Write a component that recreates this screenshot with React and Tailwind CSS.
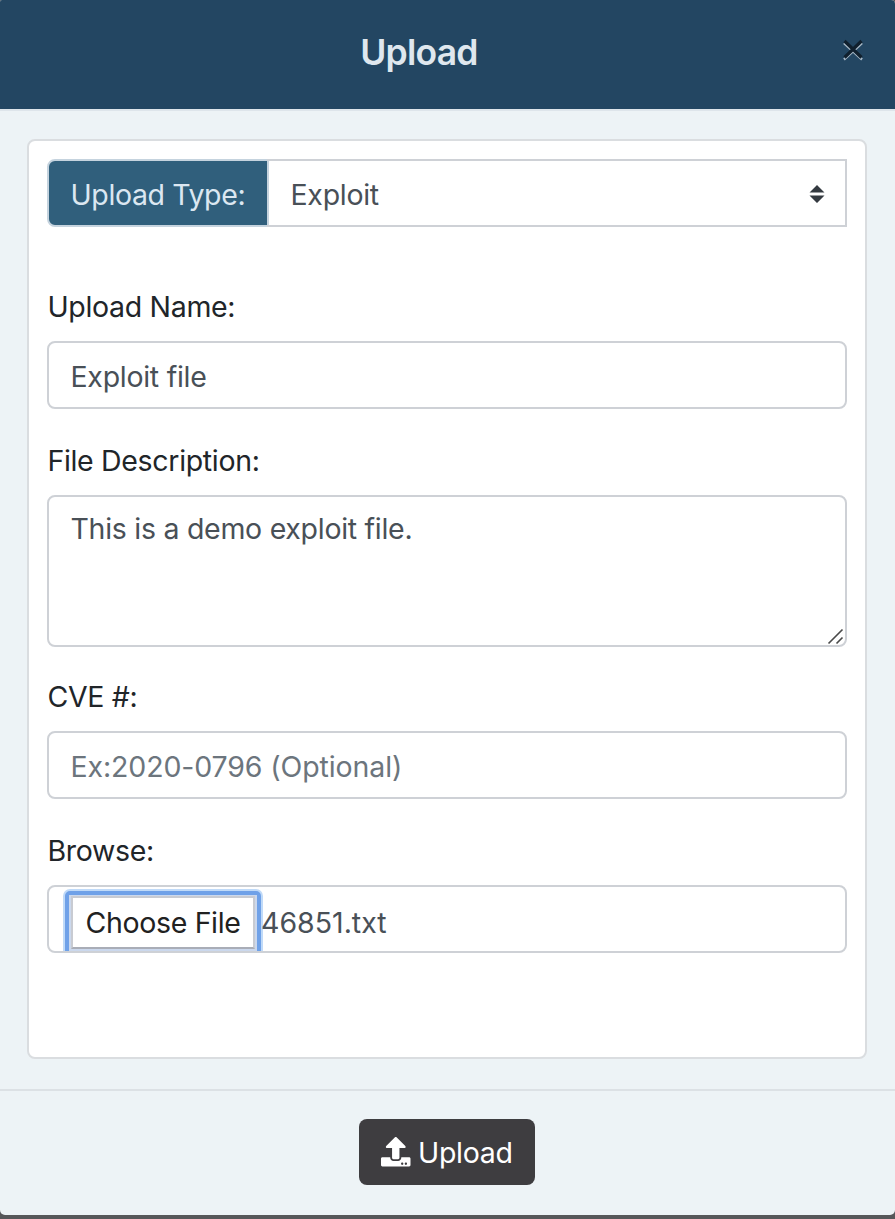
import { FaUpload } from "react-icons/fa";

const field =
  "block w-full rounded-lg border-2 border-[#ced1d6] bg-white px-[21.5px] text-[#495057] outline-none placeholder:tracking-[-0.12px] placeholder:text-[#6c757d] placeholder:opacity-100";

function Field({ label, id, children, className = "" }) {
  return (
    <div className={`flex flex-col ${className}`}>
      <label htmlFor={id} className="mb-[14px] block h-10 pl-[0.4px] leading-10 tracking-[-0.32px] text-[#212529]">
        {label}
      </label>
      {children}
    </div>
  );
}

function CloseIcon() {
  return (
    <svg width="22" height="24" viewBox="0 0 22 24" fill="none">
      <path d="M2 5 20 21.5M20 5 2 21.5" stroke="#a9bac8" strokeWidth="2.4" />
      <path d="M2.5 3 19.5 19.5M19.5 3 2.5 19.5" stroke="#10202e" strokeWidth="3.2" />
    </svg>
  );
}

export default function App() {
  return (
    <div className="h-[1219px] w-[895px] bg-[#565759] font-['Inter',sans-serif] text-[28.5px] tracking-[-0.28px]">
      <div className="flex h-[1215px] flex-col overflow-hidden rounded-[5px] rounded-tl-[2px] rounded-tr-[4px] bg-[#edf3f6]">
        <header className="flex h-[111px] shrink-0 border-b-2 border-[#dee5eb] bg-[#234662] pr-[31px]">
          <h5 className="flex-1 pt-[26px] pr-[4px] text-center text-[35.5px] leading-[54px] font-semibold tracking-[-0.75px] text-[#dfe7ee]">
            Upload
          </h5>
          <button type="button" aria-label="Close" className="mt-[38px] h-6 w-[22px]">
            <CloseIcon />
          </button>
        </header>

        <main className="px-7 pt-7 pl-[27px]">
          <div className="h-[920px] w-[840px] rounded-lg border-2 border-[#dadde0] bg-white p-[18px]">
            <div className="flex h-[68px]">
              <span className="flex w-[222px] shrink-0 items-center rounded-l-lg border-2 border-[#c5d3de] bg-[#305f7c] pl-[21.5px] pt-[5px] tracking-[-0.38px] text-[#dbe7f1]">
                Upload Type:
              </span>
              <div className="-ml-0.5 flex flex-1 items-center justify-between border-2 border-l-0 border-[#ced1d6] pr-[20.5px] pl-[23.5px] text-[#495057]">
                <span className="pt-[5px]">Exploit</span>
                <svg className="mt-0.5" width="16" height="20" viewBox="0 0 16 20" fill="#343a40">
                  <path d="M8 1 15.5 8.5H.5ZM8 19 .5 11.5h15Z" />
                </svg>
              </div>
            </div>

            <Field label="Upload Name:" id="name" className="mt-[60px]">
              <input id="name" className={`${field} h-[68px] pt-0.5`} defaultValue="Exploit file" />
            </Field>

            <Field label="File Description:" id="description" className="mt-8">
              <div className="relative">
                <textarea
                  id="description"
                  className={`${field} h-[152px] resize-none pt-[11px] leading-[42px]`}
                  defaultValue="This is a demo exploit file."
                />
                <svg className="absolute right-[3px] bottom-[2px]" width="17" height="17" viewBox="0 0 17 17" stroke="#4a4a4a" strokeWidth="1.6">
                  <path d="M1.5 15.5 15.5 1.5M9.5 15.5 15.5 9.5" />
                </svg>
              </div>
            </Field>

            <Field label="CVE #:" id="cve" className="mt-[30px]">
              <input id="cve" className={`${field} h-[68px] pt-0.5`} placeholder="Ex:2020-0796 (Optional)" />
            </Field>

            <Field label="Browse:" id="browse" className="mt-8">
              <div className="flex h-[68px] overflow-hidden rounded-lg border-2 border-[#ced1d6] pl-[14px] text-[#495057]">
                <div className="mt-[2px] h-[68px] w-[200px] shrink-0 rounded-[7px] border-2 border-[#c0daf8] bg-[#6fa1e8] p-1">
                  <div className="h-full bg-[#cbd8ed] px-[2px] pt-px">
                    <button
                      id="browse"
                      type="button"
                      className="block h-[53px] w-full border-2 border-[#c8cbd2] border-b-[#a9adb7] bg-white text-center leading-[50px] tracking-[-0.34px] text-[#212121]"
                    >
                      Choose File
                    </button>
                  </div>
                </div>
                <span className="-ml-0.5 leading-[72px] tracking-[0px]">46851.txt</span>
              </div>
            </Field>
          </div>
        </main>

        <footer className="mt-[30px] flex flex-1 justify-center border-t-2 border-[#dce1e5] pt-7 pr-[2px]">
          <button
            type="button"
            className="flex h-[66px] w-[176px] items-center rounded-lg bg-[#3e3d40] pl-[22.5px] text-white"
          >
            <FaUpload className="size-[29.5px] shrink-0" />
            <span className="pt-0.5 pl-[7.5px]">Upload</span>
          </button>
        </footer>
      </div>
    </div>
  );
}
